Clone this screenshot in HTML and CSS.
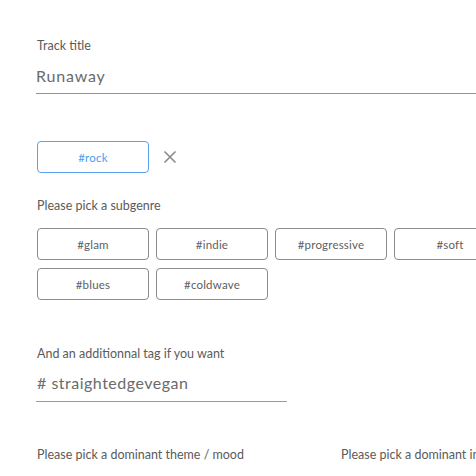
FILE: index.html
```html
<!DOCTYPE html>
<html>
<head>
<meta charset="utf-8">
<link rel="stylesheet" href="styles.css">
</head>
<body>
<div class="page">
  <div class="field title-field">
    <div class="label">Track title</div>
    <div class="input input-blue">Runaway</div>
  </div>

  <div class="selected-row">
    <div class="chip chip-active">#rock</div>
    <svg class="close" width="14" height="14" viewBox="0 0 14 14"><path d="M1.5 1.5 L12.5 12.5 M12.5 1.5 L1.5 12.5" stroke="#8a8a8a" stroke-width="1.6" fill="none"/></svg>
  </div>

  <div class="label subgenre-label">Please pick a subgenre</div>
  <div class="chips">
    <div class="chip">#glam</div>
    <div class="chip">#indie</div>
    <div class="chip">#progressive</div>
    <div class="chip">#soft</div>
    <div class="chip">#blues</div>
    <div class="chip">#coldwave</div>
  </div>

  <div class="field tag-field">
    <div class="label">And an additionnal tag if you want</div>
    <div class="input input-gray"># straightedgevegan</div>
  </div>

  <div class="bottom-row">
    <div class="label">Please pick a dominant theme / mood</div>
    <div class="label">Please pick a dominant instrument</div>
  </div>
</div>
</body>
</html>
```

FILE: styles.css
```css
html, body {
  margin: 0;
  padding: 0;
  background: #fff;
  overflow: hidden;
}
.page {
  width: 476px;
  height: 476px;
  overflow: hidden;
  padding: 38px 0 0 36px;
  box-sizing: border-box;
  font-family: Lato, "Noto Sans", sans-serif;
  color: #5e5e5e;
}
.label {
  font-size: 12.5px;
  line-height: 16px;
  color: #5b5b5b;
  white-space: nowrap;
  padding-left: 1px;
}
.input {
  font-size: 16px;
  line-height: 20px;
  color: #6a6a6a;
  margin-top: 12px;
  padding-bottom: 7px;
  letter-spacing: 0.8px;
}
.title-field {
  width: 700px;
}
.input-blue {
  border-bottom: 1px solid #5a9ee6;
}
.selected-row {
  margin-top: 47px;
  display: flex;
  align-items: center;
  gap: 14px;
  padding-left: 1px;
}
.chip {
  box-sizing: border-box;
  width: 112px;
  height: 32px;
  border: 1px solid #8c8c8c;
  border-radius: 4px;
  display: flex;
  align-items: center;
  justify-content: center;
  font-size: 11.5px;
  letter-spacing: 0.2px;
  color: #606060;
  flex: none;
}
.chip-active {
  border-color: #5aa2ec;
  color: #4aa0ee;
}
.close {
  display: block;
}
.subgenre-label {
  margin-top: 25px;
}
.chips {
  margin-top: 14px;
  width: 470px;
  display: flex;
  flex-wrap: wrap;
  column-gap: 7px;
  row-gap: 8px;
  padding-left: 1px;
}
.tag-field {
  margin-top: 46px;
  width: 251px;
}
.input-gray {
  border-bottom: 1px solid #9a9a9a;
  margin-top: 11px;
  padding-bottom: 8px;
  font-size: 16px;
  letter-spacing: 0.5px;
}
.tag-field .input {
  padding-left: 1px;
}
.bottom-row {
  margin-top: 45px;
  display: grid;
  grid-template-columns: 304px auto;
}
```
